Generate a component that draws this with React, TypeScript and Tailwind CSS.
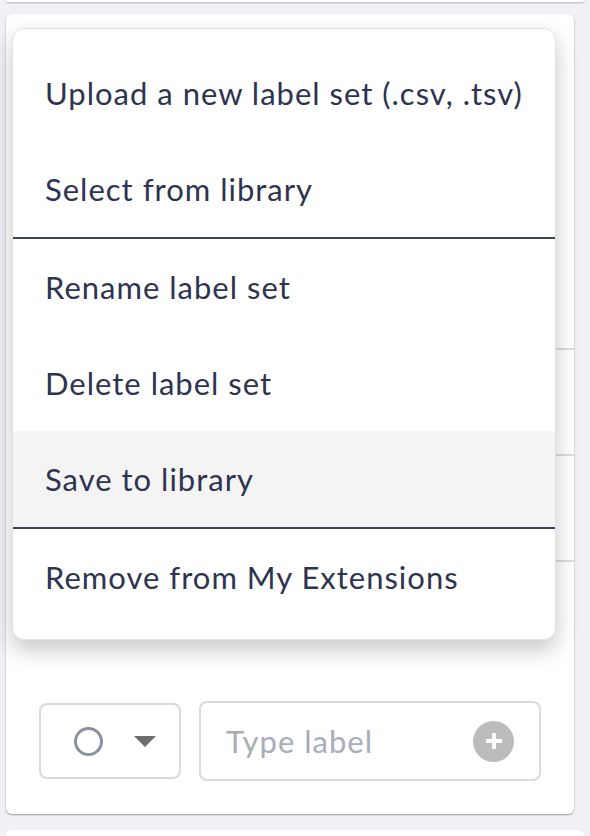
import React from 'react';

const items = [
  { label: 'Upload a new label set (.csv, .tsv)' },
  { label: 'Select from library', divider: true },
  { label: 'Rename label set' },
  { label: 'Delete label set' },
  { label: 'Save to library', active: true, divider: true },
  { label: 'Remove from My Extensions' },
];

const App = () => {
  return (
    <div
      className="min-h-[836px] bg-[#f0f1f5] px-[6px] flex flex-col gap-[12px] overflow-hidden"
      style={{ fontFamily: 'Lato, "Open Sans", sans-serif' }}
    >
      {/* card above, mostly scrolled off */}
      <div className="h-[2px] bg-white rounded-b-md shadow-[0_1px_2px_rgba(0,0,0,0.25)]" />

      <div className="relative h-[800px] w-[568px] bg-white rounded-md shadow-[0_1px_2px_rgba(0,0,0,0.35)] flex flex-col">
        {/* rows hidden behind the menu */}
        <div className="h-[336px] ml-[33px] border-b-2 border-[#dcdde2]" />
        <div className="h-[106px] ml-[33px] border-b-2 border-[#dcdde2]" />
        <div className="h-[106px] ml-[33px] border-b-2 border-[#dcdde2]" />

        <div className="mt-auto mb-[33px] mx-[33px] flex items-center gap-[18px]">
          <button className="w-[142px] h-[76px] border-2 border-[#d6d9e6] rounded-lg flex items-center pl-[33px] gap-[31px]">
            <span className="w-[29px] h-[29px] rounded-full border-[3px] border-[#8a90a3]" />
            <svg width="22" height="11" viewBox="0 0 22 11">
              <path d="M0 0h22L11 11z" fill="#6e6e6e" />
            </svg>
          </button>
          <div className="w-[342px] h-[80px] border-2 border-[#d6d9e6] rounded-lg flex items-center pl-[25px] pr-[25px]">
            <span className="flex-1 text-[31px] tracking-[1px] text-[#a9acba]">Type label</span>
            <span className="w-[41px] h-[41px] rounded-full bg-[#bcbcbc] flex items-center justify-center">
              <svg width="22" height="22" viewBox="0 0 22 22">
                <path d="M11 3v16M3 11h16" stroke="white" strokeWidth="4" />
              </svg>
            </span>
          </div>
        </div>

        {/* dropdown menu */}
        <div className="absolute left-[6px] top-[14px] w-[544px] pt-[16px] pb-[14px] bg-white rounded-[12px] border border-[#e2e2e2] shadow-[0_10px_22px_rgba(0,0,0,0.22)]">
          {items.map((item, i) => (
            <React.Fragment key={i}>
              <div
                className={`h-[96px] flex items-center px-[32px] text-[31px] tracking-[1px] text-[#2e3450] ${
                  item.active ? 'bg-[#f4f4f4]' : ''
                }`}
              >
                {item.label}
              </div>
              {item.divider && <div className="h-[2px] bg-[#3d4359]" />}
            </React.Fragment>
          ))}
        </div>
      </div>

      <div className="h-[40px] bg-white rounded-t-md mt-[4px]" />
    </div>
  );
};

export default App;
